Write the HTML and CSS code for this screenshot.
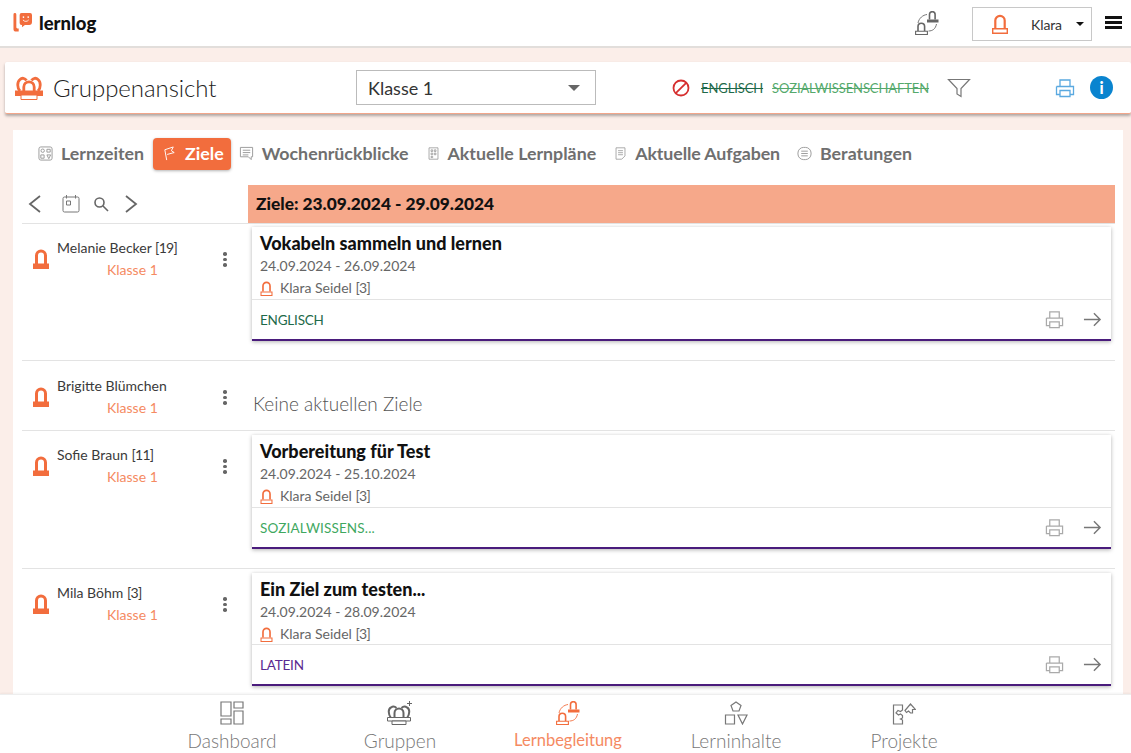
FILE: index.html
```html
<!DOCTYPE html>
<html lang="de">
<head>
<meta charset="utf-8">
<title>lernlog</title>
<link rel="stylesheet" href="styles.css">
</head>
<body>
<svg class="defs" width="0" height="0">
  <symbol id="pawn" viewBox="0 0 16 20">
    <path d="M3.300 14V6.500a4.700 4.700 0 0 1 9.400 0V14" fill="none" stroke="currentColor" stroke-width="2.200"/>
    <path d="M.7 14.700h14.600v4.600H.7z" fill="none" stroke="currentColor" stroke-width="1.400"/>
  </symbol>
  <symbol id="pawnsolid" viewBox="0 0 16 20">
    <path d="M3.500 15V6.500a4.500 4.500 0 0 1 9 0V15" fill="none" stroke="currentColor" stroke-width="3"/>
    <path d="M0 14.500h16V20H0z" fill="currentColor"/>
  </symbol>
  <symbol id="printer" viewBox="0 0 20 20">
    <path d="M5 8V2h10v6M1.500 8.500h17v8h-3M4.500 16.500h-3v-8M5 12.500h10v6H5z" fill="none" stroke="currentColor" stroke-width="1.300"/>
  </symbol>
  <symbol id="arrow" viewBox="0 0 20 20">
    <path d="M1 10h17M11.500 3.500 18 10l-6.500 6.500" fill="none" stroke="currentColor" stroke-width="1.500"/>
  </symbol>
  <symbol id="exchange" viewBox="0 0 24 24">
    <path d="M3 12C4 7 8 4 12 3.500M13.500 20c4 0 7-2 8-7" fill="none" stroke="currentColor" stroke-width=".9"/>
    <path d="M14.500 8.500V3.500a2.800 2.800 0 0 1 5.600 0v5" fill="none" stroke="currentColor" stroke-width="1.600"/>
    <path d="M12 8.500h11.500v3H12z" fill="currentColor"/>
    <path d="M3 20v-4.500a3.300 3.300 0 0 1 6.600 0V20" fill="none" stroke="currentColor" stroke-width="1.600"/>
    <path d="M.6 20.300h11.800v3.200H.6z" fill="none" stroke="currentColor" stroke-width="1.100"/>
  </symbol>
  <symbol id="group" viewBox="0 0 28 24">
    <path d="M5 15C2 12 2 6 5 3.500c2-2 5-1.500 6.500 1M23 15c3-3 3-9 0-11.500-2-2-5-1.500-6.500 1" fill="none" stroke="currentColor" stroke-width="2.800"/>
    <path d="M8.800 16v-5a5.200 5.200 0 0 1 10.400 0v5" fill="none" stroke="currentColor" stroke-width="2.800"/>
    <path d="M0 14.500h28V20H0z" fill="currentColor"/>
    <path d="M6 19h16v4.500H6z" fill="#fff" stroke="currentColor" stroke-width="1"/>
  </symbol>
  <symbol id="groupplus" viewBox="0 0 26 24">
    <path d="M4 17C1 13 1 8 4 6.500c2-1.500 4-1 5.500.5M20 17c3-4 3-9 0-10.500-2-1.500-4-1-5.500.5" fill="none" stroke="currentColor" stroke-width="2"/>
    <path d="M7.500 17v-5a4.500 4.500 0 0 1 9 0v5" fill="none" stroke="currentColor" stroke-width="2"/>
    <path d="M.5 16.500h23v3.500H.5z" fill="#fff" stroke="currentColor" stroke-width="1"/>
    <path d="M5 20h14v3.500H5z" fill="#fff" stroke="currentColor" stroke-width="1"/>
    <path d="M22.500 0v5M20 2.500h5" fill="none" stroke="currentColor" stroke-width="1"/>
  </symbol>
</svg>

<header class="topbar">
  <div class="brand">
    <svg class="logo" viewBox="0 0 20 20" width="19" height="19">
      <path d="M0 1.500a1.500 1.500 0 0 1 3 0v13.500a1.200 1.200 0 0 0 1.200 1.200h1.300v3.300h-2.800c-1.700 0-2.700-1-2.700-2.500z" fill="#f26d3d" transform="translate(.5)"/>
      <path d="M9 0h9a2 2 0 0 1 2 2v7.500a3 3 0 0 1-3 3h-4.500l-3 2.500v-2.500H9a2 2 0 0 1-2-2V2a2 2 0 0 1 2-2z" fill="#f26d3d"/>
      <circle cx="11" cy="4.300" r=".9" fill="#fff"/><circle cx="16" cy="4.300" r=".9" fill="#fff"/>
      <path d="M10.500 7.300c1.500 2 4.500 2 6 0" fill="none" stroke="#fff" stroke-width=".9"/>
    </svg>
    <span class="brand-name">lernlog</span>
  </div>
  <div class="top-actions">
    <svg class="exchange-icon"><use href="#exchange"/></svg>
    <div class="user-select">
      <svg class="user-pawn"><use href="#pawn"/></svg>
      <span class="user-name">Klara</span>
      <span class="caret-small"></span>
    </div>
    <div class="burger"><i></i><i></i><i></i></div>
  </div>
</header>

<section class="titlebar">
  <div class="title-left">
    <svg class="group-icon"><use href="#group"/></svg>
    <h1>Gruppenansicht</h1>
  </div>
  <div class="class-select"><span>Klasse 1</span><span class="caret"></span></div>
  <div class="filters">
    <svg class="ban" viewBox="0 0 18 18"><circle cx="9" cy="9" r="7.500"/><path d="M3.800 14.200 14.200 3.800"/></svg>
    <s class="f-en">ENGLISCH</s>
    <s class="f-sw">SOZIALWISSENSCHAFTEN</s>
    <svg class="funnel" viewBox="0 0 24 20"><path d="M1.500 1.500h21l-8.500 9v8l-4-2.500v-5.500z"/></svg>
  </div>
  <div class="title-actions">
    <svg class="print-blue"><use href="#printer"/></svg>
    <span class="info">i</span>
  </div>
</section>

<main class="panel">
  <nav class="tabs">
    <a class="tab tab-first">
      <svg class="tab-icon" viewBox="0 0 16 16"><rect x="1" y="1" width="14" height="14" rx="2"/><circle cx="5" cy="5" r="1.800"/><path d="M9.500 3.500h3.500v3H9.500zM3 9.500h3.500V13H3zM9.500 9.500h4l-2 4z"/></svg>
      Lernzeiten
    </a>
    <a class="tab active">
      <svg class="tab-icon" viewBox="0 0 16 16"><path d="M5 15 3 4l9-3-2 4 3 2-7.500 2"/></svg>
      Ziele
    </a>
    <a class="tab">
      <svg class="tab-icon" viewBox="0 0 16 16"><path d="M1.500 1.500h13v10h-1.500v3l-3-3h-8.500zM4 4.500h8M4 7h8M4 9.500h6"/></svg>
      Wochenrückblicke
    </a>
    <a class="tab tab-narrow">
      <svg class="tab-icon" viewBox="0 0 16 16"><path d="M2.500 1h11v14h-11zM5 3.500h2v2H5zM9 3.500h2v2H9zM5 7.500h2v2H5zM9 7.500h2v2H9zM5 11.500h2v1.500H5z"/></svg>
      Aktuelle Lernpläne
    </a>
    <a class="tab tab-narrow tab-tight">
      <svg class="tab-icon" viewBox="0 0 16 16"><path d="M2.500 1h11v10l-4 4h-7zM5 4.500h6M5 7h6M5 9.500h6"/></svg>
      Aktuelle Aufgaben
    </a>
    <a class="tab">
      <svg class="tab-icon" viewBox="0 0 16 16"><rect x="1" y="1.500" width="14" height="13" rx="6"/><path d="M4.500 5.500h7M4.500 8h7M4.500 10.500h7"/></svg>
      Beratungen
    </a>
  </nav>

  <div class="week-row">
    <div class="week-nav">
      <svg class="chev" viewBox="0 0 14 20"><path d="M12 2 2 10l10 8"/></svg>
      <svg class="cal" viewBox="0 0 18 18"><rect x="1" y="2" width="16" height="15" rx="1.500"/><path d="M4.500 0v3.500M13.500 0v3.500M4.500 6h4v4h-4z"/></svg>
      <svg class="search" viewBox="0 0 16 16"><circle cx="6.500" cy="6.500" r="4.500"/><path d="m10 10 5 5"/></svg>
      <svg class="chev" viewBox="0 0 14 20"><path d="m2 2 10 8-10 8"/></svg>
    </div>
    <div class="week-head">Ziele: 23.09.2024 - 29.09.2024</div>
  </div>

  <div class="rows">
    <article class="row row-first">
      <div class="student">
        <svg class="student-pawn"><use href="#pawnsolid"/></svg>
        <div class="student-text"><div class="student-name">Melanie Becker <span class="num">[19]</span></div><div class="student-class">Klasse 1</div></div>
        <span class="dots"><i></i><i></i><i></i></span>
      </div>
      <div class="goal">
        <div class="goal-body">
          <h2>Vokabeln sammeln und lernen</h2>
          <div class="dates">24.09.2024 - 26.09.2024</div>
          <div class="teacher"><svg class="teacher-pawn"><use href="#pawn"/></svg><span>Klara Seidel <span class="num">[3]</span></span></div>
        </div>
        <div class="goal-foot">
          <span class="subject en">ENGLISCH</span>
          <svg class="print-grey"><use href="#printer"/></svg>
          <svg class="arrow-grey"><use href="#arrow"/></svg>
        </div>
      </div>
    </article>

    <article class="row row-b">
      <div class="student">
        <svg class="student-pawn"><use href="#pawnsolid"/></svg>
        <div class="student-text"><div class="student-name">Brigitte Blümchen</div><div class="student-class">Klasse 1</div></div>
        <span class="dots"><i></i><i></i><i></i></span>
      </div>
      <div class="empty">Keine aktuellen Ziele</div>
    </article>

    <article class="row row-a">
      <div class="student">
        <svg class="student-pawn"><use href="#pawnsolid"/></svg>
        <div class="student-text"><div class="student-name">Sofie Braun <span class="num">[11]</span></div><div class="student-class">Klasse 1</div></div>
        <span class="dots"><i></i><i></i><i></i></span>
      </div>
      <div class="goal">
        <div class="goal-body">
          <h2>Vorbereitung für Test</h2>
          <div class="dates">24.09.2024 - 25.10.2024</div>
          <div class="teacher"><svg class="teacher-pawn"><use href="#pawn"/></svg><span>Klara Seidel <span class="num">[3]</span></span></div>
        </div>
        <div class="goal-foot">
          <span class="subject sw">SOZIALWISSENS...</span>
          <svg class="print-grey"><use href="#printer"/></svg>
          <svg class="arrow-grey"><use href="#arrow"/></svg>
        </div>
      </div>
    </article>

    <article class="row row-a">
      <div class="student">
        <svg class="student-pawn"><use href="#pawnsolid"/></svg>
        <div class="student-text"><div class="student-name">Mila Böhm <span class="num">[3]</span></div><div class="student-class">Klasse 1</div></div>
        <span class="dots"><i></i><i></i><i></i></span>
      </div>
      <div class="goal goal-short">
        <div class="goal-body">
          <h2>Ein Ziel zum testen...</h2>
          <div class="dates">24.09.2024 - 28.09.2024</div>
          <div class="teacher"><svg class="teacher-pawn"><use href="#pawn"/></svg><span>Klara Seidel <span class="num">[3]</span></span></div>
        </div>
        <div class="goal-foot">
          <span class="subject la">LATEIN</span>
          <svg class="print-grey"><use href="#printer"/></svg>
          <svg class="arrow-grey"><use href="#arrow"/></svg>
        </div>
      </div>
    </article>
  </div>
</main>

<footer class="bottomnav">
  <a class="nav-item">
    <svg class="nav-icon" viewBox="0 0 24 24"><path d="M1 1h10v14H1zM14 1h9v6h-9zM14 10h9v13h-9zM1 18h10v5H1z"/></svg>
    <span>Dashboard</span>
  </a>
  <a class="nav-item">
    <svg class="nav-group"><use href="#groupplus"/></svg>
    <span>Gruppen</span>
  </a>
  <a class="nav-item current">
    <svg class="nav-exchange"><use href="#exchange"/></svg>
    <span>Lernbegleitung</span>
  </a>
  <a class="nav-item">
    <svg class="nav-icon" viewBox="0 0 24 24"><path d="m12 1 5 3.500-2 5.500H9L7 4.500zM1.500 14h9v9h-9zM14 14h9l-4.500 9z"/></svg>
    <span>Lerninhalte</span>
  </a>
  <a class="nav-item">
    <svg class="nav-icon" viewBox="0 0 24 24"><path d="M1.500 4h9v5l-2 1.500L6 9.500 4 12l2.500 2 2-1 2 1.500v2.500l-2 1 2 1V23h-9zM13 9.500 18.500 3l5 5.500h-3v3.500h-2l-2-2-2 1.500z"/></svg>
    <span>Projekte</span>
  </a>
</footer>
</body>
</html>
```
FILE: styles.css
```css
* { box-sizing: border-box; }
html, body { margin: 0; height: 100%; }
body {
  width: 1131px; height: 753px; overflow: hidden;
  background: #fbeee9;
  font-family: "Lato", "Noto Sans", sans-serif;
  color: #222;
  display: flex; flex-direction: column;
}
.defs { position: absolute; }
svg { display: block; flex: none; }

.topbar {
  height: 48px; flex: none; background: #fff; border-bottom: 2px solid #e2dedb;
  display: flex; align-items: center; justify-content: space-between;
  padding: 0 9px 0 13px;
}
.brand { display: flex; align-items: center; gap: 7px; margin-bottom: 1px; }
.brand-name { font-weight: 900; font-size: 18.500px; color: #111; }
.top-actions { display: flex; align-items: center; }
.exchange-icon { width: 24px; height: 24px; color: #666; margin-right: 33px; }
.user-select {
  width: 120px; height: 34px; border: 1px solid #c8c8c8;
  display: flex; align-items: center; padding: 0 7px 0 19px;
  font-size: 14px; margin: 2px 13px 0 0;
}
.user-pawn { width: 16px; height: 20px; color: #f26d3d; }
.user-name { margin-left: 23px; flex: 1; color: #333; letter-spacing: -.1px; }
.caret-small { border: 4px solid transparent; border-top: 4px solid #111; border-bottom: 0; }
.burger { display: flex; flex-direction: column; gap: 2.500px; width: 17px; margin-bottom: 1px; }
.burger i { display: block; height: 2.500px; background: #111; }

.titlebar {
  height: 52px; flex: none; margin: 14px 0 0 5px; background: #fff; border-radius: 2px;
  display: flex; align-items: center; padding: 0 18px 0 10px;
  border-bottom: 1px solid #f2a68a; box-shadow: 0 2px 3px rgba(0,0,0,.3);
}
.title-left { display: flex; align-items: center; gap: 10px; width: 341px; }
.group-icon { width: 28px; height: 24px; color: #f26d3d; }
h1 { margin: 0; font-size: 24px; font-weight: 300; color: #222; letter-spacing: -.05px; }
.class-select {
  width: 240px; height: 35px; border: 1px solid #bbb; display: flex; align-items: center;
  justify-content: space-between; padding: 0 15px 0 11px; font-size: 18px; color: #333;
}
.caret { border: 6px solid transparent; border-top: 6px solid #666; border-bottom: 0; }
.filters { display: flex; align-items: center; margin-left: 76px; font-size: 13px; flex: 1; }
.ban { width: 18px; height: 18px; fill: none; stroke: #d62f2f; stroke-width: 1.800; margin-right: 11px; }
.f-en { color: #1e6a4a; margin-right: 9px; letter-spacing: -.1px; }
.f-sw { color: #55a96c; letter-spacing: -.1px; }
.funnel { width: 24px; height: 20px; margin-left: 18px; fill: none; stroke: #777; stroke-width: 1.200; }
.title-actions { display: flex; align-items: center; gap: 15px; }
.print-blue { width: 20px; height: 20px; color: #5aa9e0; }
.info {
  width: 23px; height: 23px; border-radius: 50%; background: #0a84cf; color: #fff;
  font-weight: 900; font-size: 16px; text-align: center; line-height: 23px;
}

.panel {
  flex: 1; min-height: 0; margin: 16px 8px 0 13px; background: #fff; overflow: hidden;
  padding: 8px 8px 0 9px;
}
.tabs { display: flex; align-items: center; height: 32px; padding-left: 16px; }
.tab {
  display: flex; align-items: center; gap: 8px; height: 32px; font-weight: 700; font-size: 17.800px; color: #6f6f6f;
  padding: 0 0 2px; margin-right: 18px;
}
.tab-first { margin-right: 9px; }
.tab.active {
  background: #f26d3d; color: #fff; border-radius: 4px; padding: 0 7px 2px 9px; margin-right: 8px;
  box-shadow: 0 1px 3px rgba(0,0,0,.3);
}
.tab-icon { width: 15px; height: 15px; fill: none; stroke: #999; stroke-width: 1; }
.tab-narrow .tab-icon { width: 13px; }
.tab-tight { margin-right: 17px; letter-spacing: -.1px; }
.active .tab-icon { stroke: #fff; }

.week-row { display: flex; height: 39px; margin-top: 15px; border-bottom: 1px solid #e3e3e3; }
.week-nav { width: 226px; display: flex; align-items: center; padding: 0 0 0 6px; }
.chev { width: 14px; height: 20px; fill: none; stroke: #666; stroke-width: 1.800; }
.cal { width: 18px; height: 18px; margin-left: 20px; fill: none; stroke: #777; stroke-width: 1; }
.search { width: 16px; height: 16px; margin: 0 15px 0 13px; fill: none; stroke: #666; stroke-width: 1.600; }
.week-head {
  flex: 1; background: #f6a88a; font-weight: 900; font-size: 17.300px; color: #111;
  display: flex; align-items: center; padding: 0 0 2px 8px;
}

.row { display: flex; border-bottom: 1px solid #e3e3e3; }
.row-first { height: 137px; }
.row-a { height: 138px; }
.row-b { height: 70px; }
.student { width: 230px; display: flex; align-items: flex-start; padding: 15px 0 0 11px; }
.row-b .student { padding-top: 16px; }
.student-pawn { width: 16px; height: 20px; margin-top: 10px; color: #f26d3d; }
.student-text { margin-left: 8px; width: 160px; }
.student-name { font-size: 14px; color: #3a3a3a; line-height: 18px; }
.num { letter-spacing: -.7px; }
.student-class { font-size: 14px; color: #f58a62; line-height: 18px; margin: 4px 0 0 50px; }
.dots { display: flex; flex-direction: column; gap: 2px; margin: 13px 0 0 6px; }
.dots i { width: 3.500px; height: 3.500px; background: #666; border-radius: 50%; }

.goal {
  flex: 1; height: 114px; margin: 4px 4px 0 0; background: #fff;
  border-bottom: 2px solid #4a1c7c; box-shadow: 0 1px 4px rgba(0,0,0,.3);
  display: flex; flex-direction: column;
}
.row-first .goal { margin-top: 3px; }
.goal-short { height: 113px; }
.goal-short .goal-body { height: 72px; }
.goal-body { height: 73px; padding: 4px 8px 0; border-bottom: 1px solid #e3e3e3; overflow: hidden; }
h2 { margin: 0 0 1px; font-size: 18px; font-weight: 900; color: #111; line-height: 24px; }
.dates { font-size: 14px; color: #666; line-height: 20px; }
.teacher { font-size: 14px; color: #666; line-height: 20px; margin-top: 2px; display: flex; align-items: center; gap: 7px; }
.teacher-pawn { width: 13px; height: 15px; color: #f26d3d; }
.goal-foot { flex: 1; display: flex; align-items: center; padding: 0 9px 0 8px; }
.subject { flex: 1; font-size: 13.500px; }
.en { color: #1e6a4a; letter-spacing: -.2px; }
.sw { color: #3fa85f; letter-spacing: .15px; }
.la { color: #5a2a90; letter-spacing: -.2px; }
.print-grey { width: 19px; height: 19px; color: #aaa; margin-right: 19px; }
.arrow-grey { width: 19px; height: 19px; color: #777; }
.empty { flex: 1; font-size: 19px; font-weight: 300; color: #555; padding: 31px 0 0 1px; }

.bottomnav {
  height: 59px; flex: none; background: #fff; border-top: 1px solid #eee;
  display: grid; grid-template-columns: repeat(5, 168px); padding-left: 148px;
  box-shadow: 0 -1px 2px rgba(0,0,0,.05);
}
.nav-item { display: flex; flex-direction: column; align-items: center; color: #777; font-size: 19px; font-weight: 300; padding-top: 6px; gap: 4px; }
.current { color: #f58a62; font-size: 16.500px; font-weight: 400; gap: 5px; }
.nav-icon { width: 24px; height: 24px; fill: none; stroke: #777; stroke-width: 1.200; }
.nav-group { width: 26px; height: 24px; color: #666; }
.nav-exchange { width: 24px; height: 24px; color: #f26d3d; }
```
